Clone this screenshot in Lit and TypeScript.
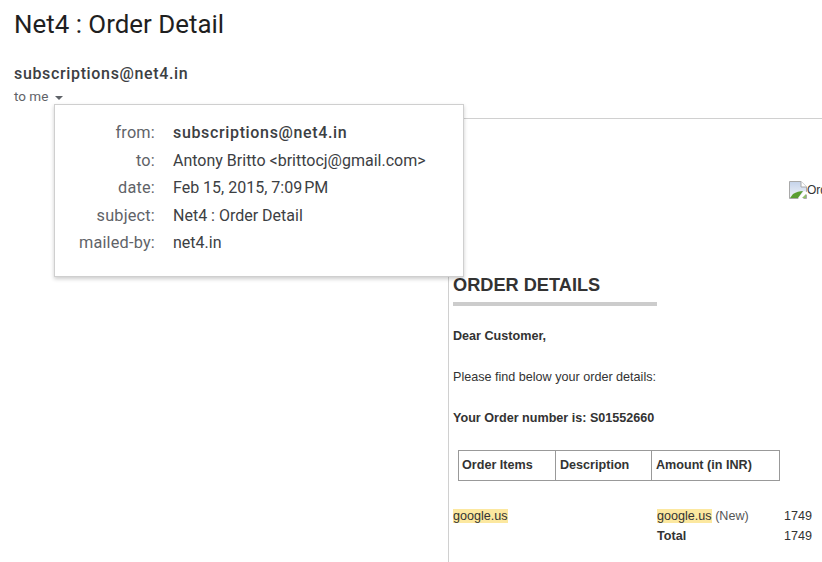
import { LitElement, html, css } from "lit";
import { customElement } from "lit/decorators.js";

const details: [string, string, boolean][] = [
  ["from:", "subscriptions@net4.in", true],
  ["to:", "Antony Britto <brittocj@gmail.com>", false],
  ["date:", "Feb 15, 2015, 7:09\u202fPM", false],
  ["subject:", "Net4 : Order Detail", false],
  ["mailed-by:", "net4.in", false],
];

@customElement("app-root")
export class AppRoot extends LitElement {
  static styles = css`
    :host { display: block; position: relative; width: 822px; height: 562px; overflow: hidden; background: #fff; font-family: Roboto, "Liberation Sans", sans-serif; color: #202124; }
    .head { padding: 9px 0 0 14px; height: 118px; box-sizing: border-box; }
    h1 { margin: 0; font-size: 25.9px; line-height: 30px; font-weight: 400; color: #1f1f1f; }
    .sender { margin-top: 25px; font-size: 16px; line-height: 20px; font-weight: 500; letter-spacing: 0.65px; color: #3c4043; }
    .to { display: flex; align-items: center; gap: 7px; font-size: 13.5px; line-height: 16px; color: #5f6368; margin-top: 4px; }
    .caret { width: 0; height: 0; border-left: 4px solid transparent; border-right: 4px solid transparent; border-top: 4px solid #5f6368; margin-top: 3px; }
    .panel { margin-left: 448px; height: 444px; box-sizing: border-box; border-top: 1px solid #d0d0d0; border-left: 1px solid #d0d0d0; padding-left: 4px; overflow: hidden; font-family: "Liberation Sans", Arial, sans-serif; font-size: 12.6px; color: #333; }
    .broken { display: flex; align-items: flex-start; margin: 62px 0 0 336px; height: 18px; width: 33px; overflow: hidden; white-space: nowrap; font-size: 12px; line-height: 18px; color: #333; }
    .broken svg { flex: none; }
    h2 { margin: 74px 0 0; font-size: 18.2px; line-height: 24px; font-weight: 700; color: #333; }
    .bar { width: 204px; height: 4px; background: #ccc; margin-top: 5px; }
    p { margin: 0; line-height: 16px; }
    .dear { margin-top: 22px; font-weight: 700; }
    .find { margin-top: 25px; }
    .num { margin-top: 25px; font-weight: 700; }
    .grid { display: grid; grid-template-columns: 96px 96px 128px; margin: 24px 0 0 5px; width: 322px; height: 31px; box-sizing: border-box; border: 1px solid #999; font-weight: 700; }
    .grid div { padding-left: 4px; line-height: 28px; border-left: 1px solid #999; white-space: nowrap; }
    .grid div:first-child { border-left: 0; padding-left: 3px; }
    .items { display: grid; grid-template-columns: 204px 127px auto; row-gap: 4px; margin-top: 27px; line-height: 16px; }
    mark { background: #fce8a0; color: #333; }
    .new { color: #555; }
    .total { font-weight: 700; }
    .pop { position: absolute; left: 54px; top: 104px; width: 410px; height: 173px; box-sizing: border-box; background: #fff; border: 1px solid #cfcfcf; box-shadow: 0 2px 4px rgba(0,0,0,.2); padding: 14px 0 0; display: grid; grid-template-columns: 100px auto; column-gap: 18px; grid-auto-rows: 27.5px; align-content: start; font-size: 16px; line-height: 27px; }
    .k { text-align: right; color: #5f6368; font-size: 16.3px; letter-spacing: 0.2px; }
    .v { color: #3c4043; white-space: nowrap; }
    .b { font-weight: 500; letter-spacing: 0.65px; }
  `;

  render() {
    return html`
      <div class="head">
        <h1>Net4 : Order Detail</h1>
        <div class="sender">subscriptions@net4.in</div>
        <div class="to">to me <span class="caret"></span></div>
      </div>
      <div class="panel">
        <div class="broken">
          <svg width="18" height="18" viewBox="0 0 18 18">
            <defs>
              <linearGradient id="sky" x1="0" y1="0" x2="0" y2="1">
                <stop offset="0" stop-color="#c5d3ea"/>
                <stop offset="1" stop-color="#f2f5fa"/>
              </linearGradient>
            </defs>
            <path d="M.5.5H12L17.5 6v11.5H.5z" fill="url(#sky)" stroke="#a9a9a9"/>
            <path d="M12 .5V6h5.5" fill="#fff" stroke="#a9a9a9"/>
            <path d="M1 17l3-4c3-2 7-3 10-3l-5 7z" fill="#5a9e32"/>
            <path d="M9 18l6-8 3 1v2l-4 5z" fill="#fff"/>
            <path d="M13 17l4-4v4z" fill="#8fbf6a"/>
          </svg>
          <span>Order</span>
        </div>
        <h2>ORDER DETAILS</h2>
        <div class="bar"></div>
        <p class="dear">Dear Customer,</p>
        <p class="find">Please find below your order details:</p>
        <p class="num">Your Order number is: S01552660</p>
        <div class="grid"><div>Order Items</div><div>Description</div><div>Amount (in INR)</div></div>
        <div class="items">
          <div><mark>google.us</mark></div><div><mark>google.us</mark> <span class="new">(New)</span></div><div>1749</div>
          <div></div><div class="total">Total</div><div>1749</div>
        </div>
      </div>
      <div class="pop">
        ${details.map(([k, v, b]) => html`<div class="k">${k}</div><div class="v ${b ? "b" : ""}">${v}</div>`)}
      </div>
    `;
  }
}
